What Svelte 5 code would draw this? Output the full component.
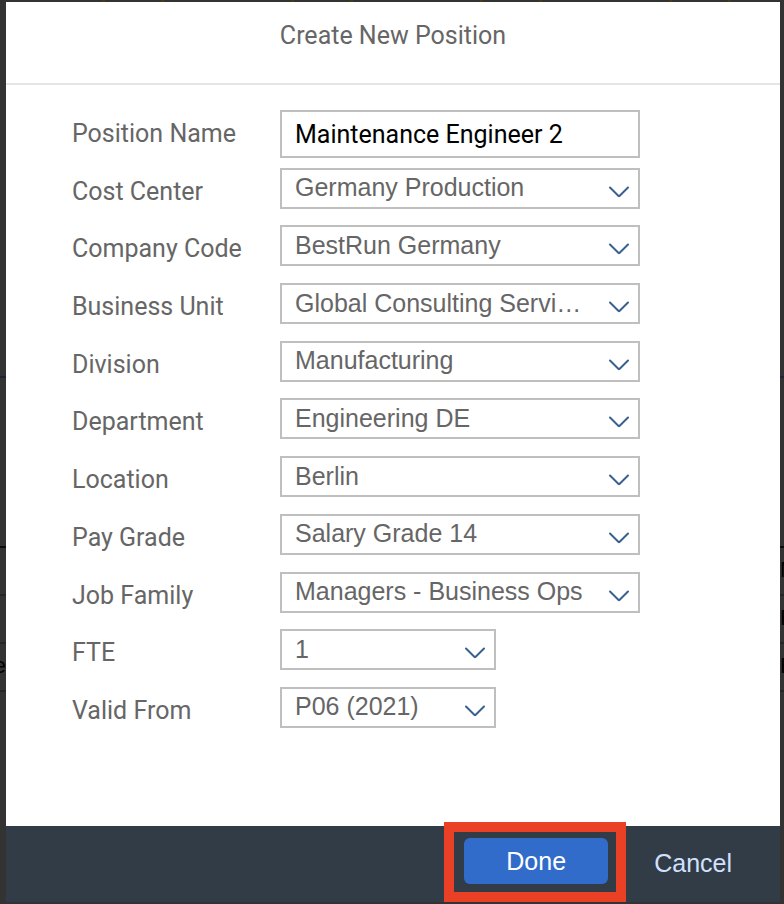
<script>
  const fields = [
    { id: 'cost-center', label: 'Cost Center', value: 'Germany Production' },
    { id: 'company-code', label: 'Company Code', value: 'BestRun Germany' },
    { id: 'business-unit', label: 'Business Unit', value: 'Global Consulting Services' },
    { id: 'division', label: 'Division', value: 'Manufacturing' },
    { id: 'department', label: 'Department', value: 'Engineering DE' },
    { id: 'location', label: 'Location', value: 'Berlin' },
    { id: 'pay-grade', label: 'Pay Grade', value: 'Salary Grade 14' },
    { id: 'job-family', label: 'Job Family', value: 'Managers - Business Ops' },
    { id: 'fte', label: 'FTE', value: '1', compact: true },
    { id: 'valid-from', label: 'Valid From', value: 'P06 (2021)', compact: true }
  ];

  let positionName = $state('Maintenance Engineer 2');
</script>

<div class="page">
  <!-- Table cells of the dimmed page, mostly covered by the dialog -->
  <div class="behind start" aria-hidden="true"><span></span><span></span><span>e</span></div>
  <div class="behind end" aria-hidden="true"><span>M</span><span>F</span><span>F</span></div>

  <div class="dialog" role="dialog" aria-labelledby="dialog-title">
    <header>
      <h1 id="dialog-title">Create New Position</h1>
    </header>

    <form id="position-form" onsubmit={(e) => e.preventDefault()}>
      <div class="row">
        <label for="position-name">Position Name</label>
        <input id="position-name" type="text" bind:value={positionName} />
      </div>
      {#each fields as field (field.id)}
        <div class="row">
          <label for={field.id}>{field.label}</label>
          <div class="picker" class:compact={field.compact}>
            <select id={field.id}>
              <option>{field.value}</option>
            </select>
            <svg viewBox="0 0 20 12" aria-hidden="true">
              <path d="M1 1.5 L9.3 9.8 Q10 10.4 10.7 9.8 L19 1.5" />
            </svg>
          </div>
        </div>
      {/each}
    </form>

    <footer>
      <div class="highlight">
        <button class="done" type="submit" form="position-form">Done</button>
      </div>
      <button class="cancel" type="button">Cancel</button>
    </footer>
  </div>
</div>

<style>
  :global(body) {
    margin: 0;
  }

  .page {
    position: relative;
    box-sizing: border-box;
    min-height: 100vh;
    padding: 2px 4px 2px 6px;
    display: flex;
    background-color: #333;
    background-image:
      repeating-linear-gradient(
        90deg,
        #333 0 102px,
        #4a3a10 102px 105px,
        #333 105px 161px,
        #4a3a10 161px 164px,
        #333 164px 189px
      ),
      linear-gradient(#1c2438, #1c2438),
      linear-gradient(#0c0c10, #0c0c10),
      linear-gradient(#262626, #262626),
      linear-gradient(#262626, #262626),
      linear-gradient(#262626, #262626);
    background-repeat: no-repeat;
    background-size: 100% 2px;
    background-position: 0 0, 0 376px, 0 546px, 0 594px, 0 642px, 0 690px;
  }

  .behind {
    position: absolute;
    top: 546px;
    display: flex;
    flex-direction: column;
    overflow: hidden;
    font-family: 'Liberation Sans', Arial, sans-serif;
    font-size: 22px;
    line-height: 48px;
    color: #000;
  }

  .behind span {
    height: 48px;
  }

  .start {
    left: 0;
    width: 6px;
    align-items: flex-end;
  }

  .end {
    right: 0;
    width: 4px;
    align-items: flex-start;
  }

  .dialog {
    flex: 1;
    min-width: 0;
    display: flex;
    flex-direction: column;
    background: #fff;
    font-family: Roboto, 'Noto Sans', sans-serif;
    font-size: 25px;
    color: #666;
  }

  header {
    box-sizing: border-box;
    height: 83px;
    padding-top: 18px;
    border-bottom: 2px solid #e5e5e5;
    text-align: center;
  }

  h1 {
    margin: 0;
    font-size: 25px;
    font-weight: 400;
    line-height: 32px;
  }

  form {
    flex: 1;
    display: flex;
    flex-direction: column;
    justify-content: space-between;
    padding: 25px 140px 98px 66px;
  }

  .row {
    display: grid;
    grid-template-columns: 208px minmax(0, 1fr);
    align-items: start;
    height: 41px;
  }

  label {
    line-height: 48px;
    white-space: nowrap;
  }

  input,
  select {
    box-sizing: border-box;
    width: 100%;
    margin: 0;
    border: 2px solid #bfbfbf;
    border-radius: 0;
    background: #fff;
    font-size: 25px;
  }

  input {
    height: 48px;
    padding: 0 13px;
    font-family: inherit;
    color: #000;
  }

  .picker {
    position: relative;
  }

  .compact {
    width: 60%;
  }

  select {
    display: block;
    appearance: none;
    height: 41px;
    padding: 0 52px 2px 13px;
    font-family: 'Liberation Sans', Arial, sans-serif;
    color: #666;
    text-overflow: ellipsis;
    white-space: nowrap;
    overflow: hidden;
  }

  svg {
    position: absolute;
    top: 18px;
    right: 11px;
    width: 20px;
    height: 12px;
    pointer-events: none;
  }

  path {
    fill: none;
    stroke: #39608f;
    stroke-width: 2;
    stroke-linecap: round;
  }

  footer {
    display: flex;
    justify-content: flex-end;
    align-items: flex-start;
    gap: 46px;
    box-sizing: border-box;
    height: 76px;
    padding: 12px 48px 0 0;
    background: #323c46;
  }

  .highlight {
    position: relative;
  }

  .highlight::after {
    content: '';
    position: absolute;
    inset: -16px -18px -18px -20px;
    border: 10px solid #ea4025;
    pointer-events: none;
  }

  button {
    border: 0;
    padding: 0;
    font-family: 'Liberation Sans', Arial, sans-serif;
    font-size: 25px;
    cursor: pointer;
  }

  .done {
    display: block;
    width: 144px;
    height: 46px;
    border-radius: 6px;
    background: #326ccb;
    color: #fff;
  }

  .cancel {
    height: 50px;
    background: transparent;
    color: #d1e0ff;
  }
</style>
